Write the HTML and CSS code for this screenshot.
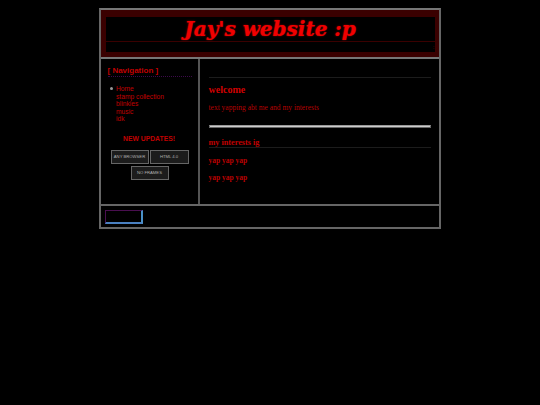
FILE: index.html
```html
<!DOCTYPE html>
<html lang="en">
<head>
    <meta charset="UTF-8">
    <title>Jay's website :p</title>
    <link rel="stylesheet" href="styles.css">
</head>
<body>

<div class="page">
    <!-- Banner -->
    <header class="banner">
        <div class="banner-inner">
            <h1>Jay's website :p</h1>
            <div class="marquee">:</div>
        </div>
    </header>

    <div class="main">
        <!-- Sidebar -->
        <nav class="sidebar">
            <h3>[ Navigation ]</h3>
            <ul>
                <li class="nav-item">Home</li>
                <li>stamp collection</li>
                <li>blinkies</li>
                <li>music</li>
                <li>idk</li>
            </ul>
            <p class="updates">NEW UPDATES!</p>
            <div class="badges">
                <span class="badge">ANY BROWSER</span>
                <span class="badge badge-html">HTML 4.0</span>
                <span class="badge">NO FRAMES</span>
            </div>
        </nav>

        <!-- Content -->
        <main class="content">
            <h2>welcome</h2>
            <p class="intro">text yapping abt me and my interests</p>
            <div class="divider"></div>
            <h4>my interests ig</h4>
            <p class="yap">yap yap yap</p>
            <p class="yap">yap yap yap</p>
        </main>
    </div>

    <footer class="footer">
        <div class="counter"></div>
    </footer>
</div>

</body>
</html>
```

FILE: styles.css
```css
body {
    margin: 0;
    padding: 0;
    background-color: #000;
    color: #d00000;
    font-family: "Liberation Serif", serif;
}

.page {
    width: 338px;
    margin: 8px auto 0;
    position: relative;
    left: -0.5px;
    border: 2px solid #666;
    border-top-color: #777;
}

.banner {
    background-color: #3a0000;
    padding: 7px 4px 5px 5px;
    border-bottom: 2px solid #777;
}

.banner-inner {
    background-color: #000;
}

.banner h1 {
    margin: 0;
    height: 24px;
    line-height: 25px;
    border-bottom: 1px solid #3a0000;
    text-align: center;
    font-family: "DejaVu Serif", serif;
    font-size: 20px;
    font-style: italic;
    font-weight: bold;
    color: #f00000;
    -webkit-text-stroke: 0.2px #f00000;
    text-shadow: 0 0 2px #900000;
}

.marquee {
    height: 10px;
    line-height: 10px;
    text-align: right;
    font-family: "Liberation Sans", sans-serif;
    font-size: 6px;
    color: #800000;
}

.main {
    display: flex;
    height: 145px;
}

.sidebar {
    width: 97px;
    border-right: 2px solid #555;
    box-sizing: content-box;
    font-family: "Liberation Sans", sans-serif;
}

.sidebar h3 {
    margin: 7px 6px 0 7px;
    padding-bottom: 1px;
    border-bottom: 1px dotted #3c0a4a;
    font-size: 8px;
    line-height: 9px;
    color: #c00000;
}

.sidebar ul {
    margin: 8px 0 0;
    padding: 0 0 0 15.5px;
    font-size: 6.7px;
    line-height: 7.5px;
    color: #c00000;
}

.sidebar li {
    list-style: none;
}

.sidebar li.nav-item::before {
    content: "";
    display: inline-block;
    width: 3px;
    height: 3px;
    margin: 0 3.5px 1px -6.5px;
    border-radius: 50%;
    background-color: #999;
}

.updates {
    margin: 11px 0 0;
    text-align: center;
    font-size: 6.8px;
    line-height: 9px;
    font-weight: bold;
    color: #c00000;
}

.badges {
    display: flex;
    flex-wrap: wrap;
    justify-content: center;
    gap: 2px 1px;
    margin-top: 7px;
    padding-left: 1px;
}

.badge {
    box-sizing: border-box;
    width: 38px;
    height: 14px;
    border: 1px solid #666;
    background-color: #1c1c1c;
    text-align: center;
    font-size: 4.2px;
    line-height: 12px;
    color: #b0b0b0;
}

.badge-html {
    width: 39px;
}

.content {
    flex: 1;
    padding: 18px 8px 0 9px;
}

.content h2 {
    margin: 0;
    padding-top: 6px;
    border-top: 1px solid #1c1c1c;
    font-size: 10px;
    line-height: 11px;
    color: #d00000;
}

.intro {
    margin: 8px 0 0;
    font-size: 7.5px;
    line-height: 9px;
    color: #b80000;
}

.divider {
    height: 1px;
    margin-top: 13px;
    border: 1px solid #666;
    border-top-color: #999;
    background-color: #ccc;
}

.content h4 {
    margin: 10px 0 0;
    border-bottom: 1px solid #1c1c1c;
    font-size: 8.2px;
    line-height: 9px;
    color: #c00000;
}

.yap {
    margin: 8px 0 0;
    font-size: 7.5px;
    line-height: 9px;
    font-weight: bold;
    color: #b80000;
}

.footer {
    box-sizing: border-box;
    height: 23px;
    border-top: 2px solid #666;
    padding: 4px 0 0 4px;
}

.counter {
    box-sizing: border-box;
    width: 38px;
    height: 14px;
    border: 1px solid #4a0f50;
    border-right: 2px solid #4a90c8;
    border-bottom: 2px solid #4a80c0;
}
```
